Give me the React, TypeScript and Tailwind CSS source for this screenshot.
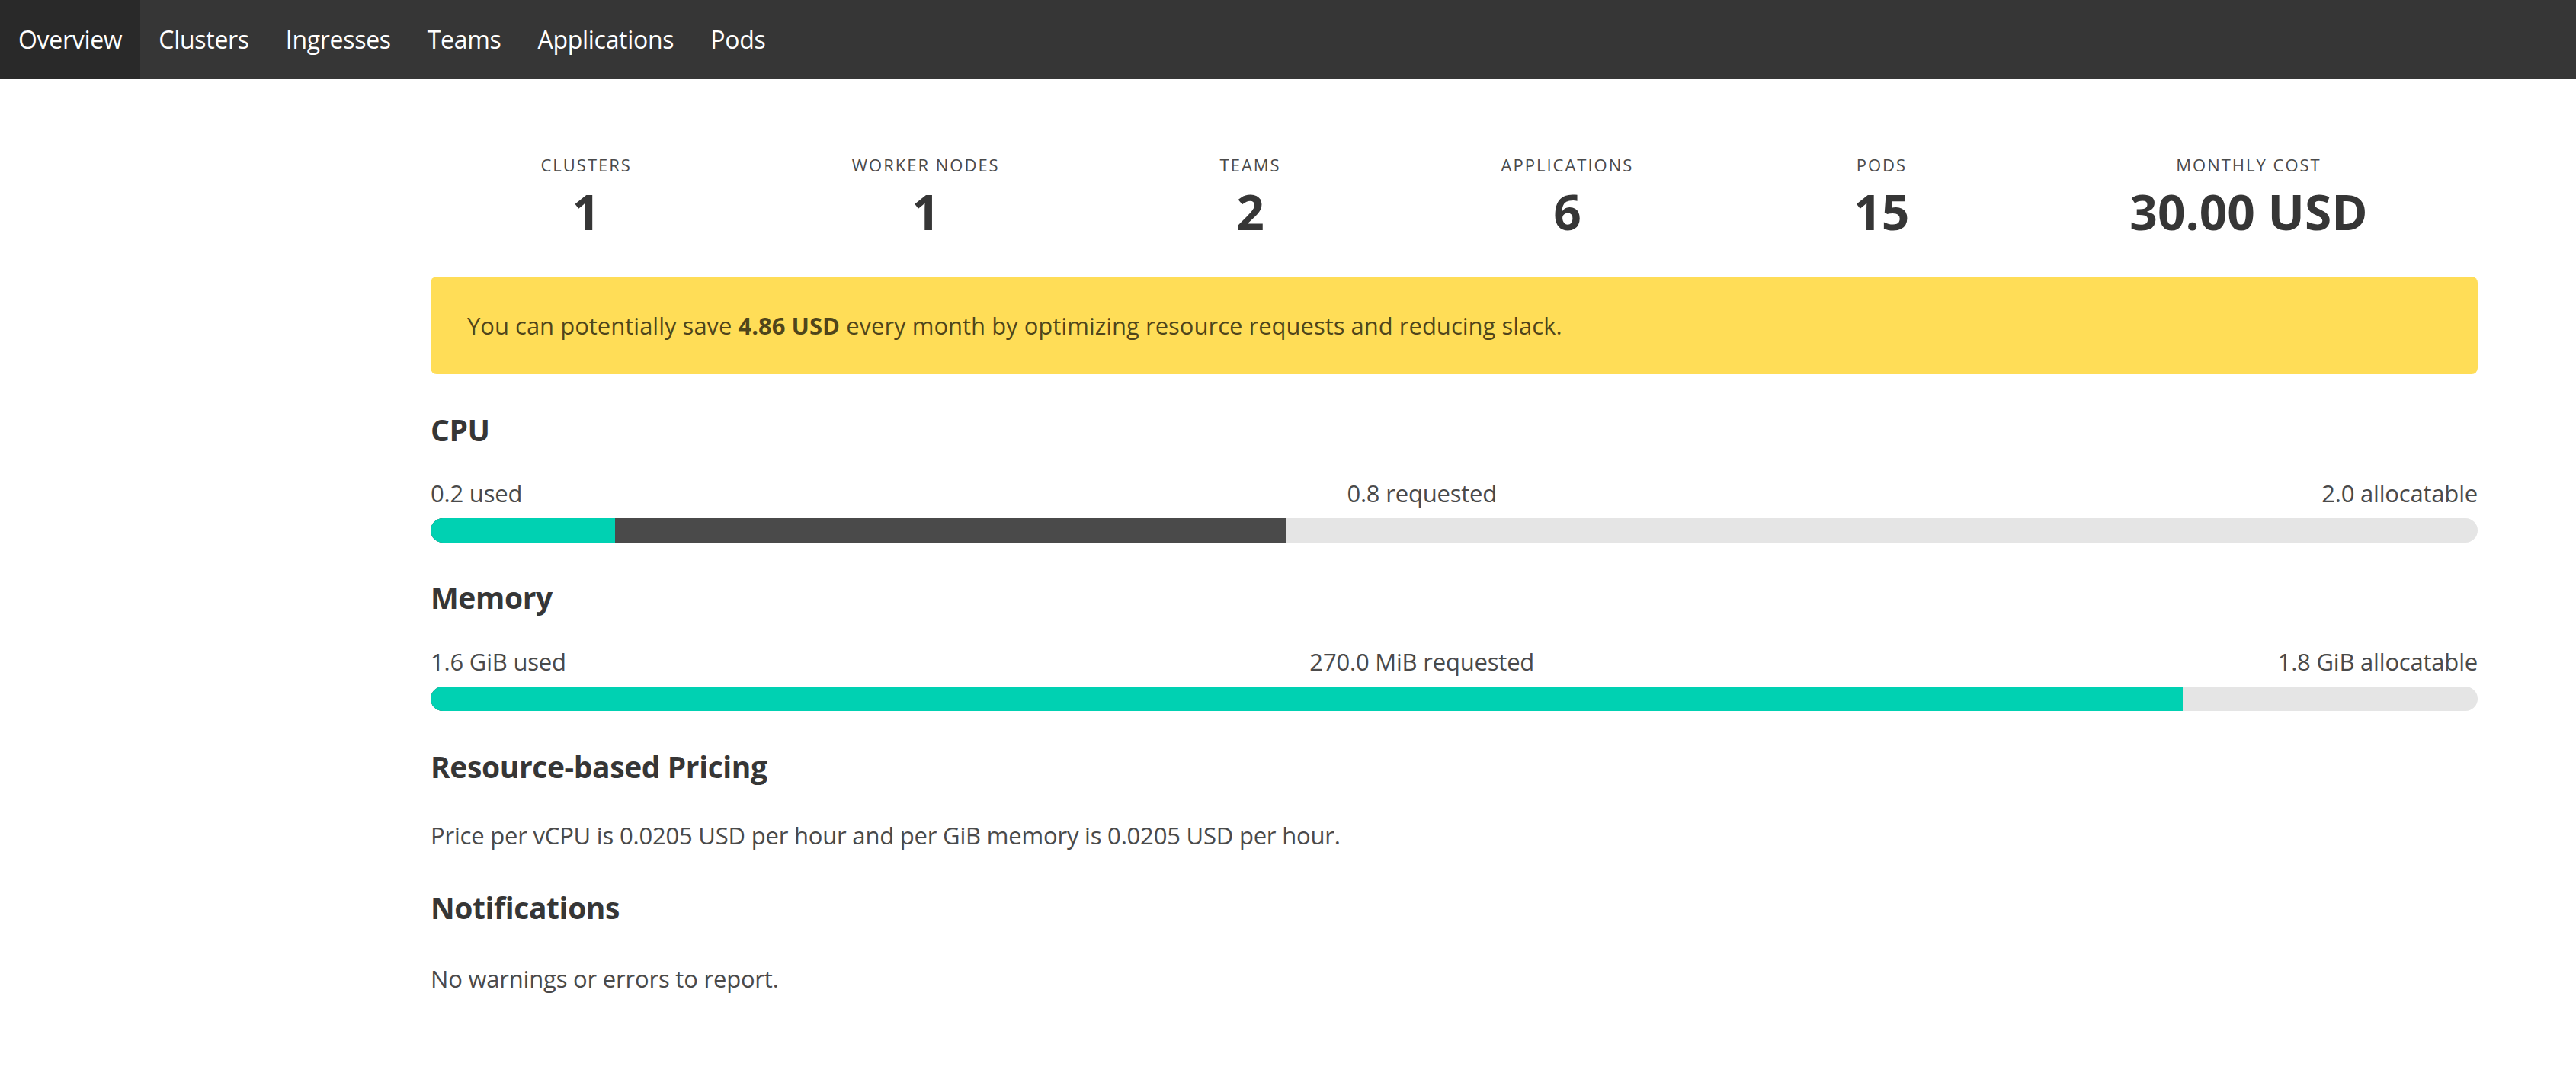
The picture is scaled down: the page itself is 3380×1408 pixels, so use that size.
import React from "react";

const stats = [
  { label: "Clusters", value: "1" },
  { label: "Worker Nodes", value: "1" },
  { label: "Teams", value: "2" },
  { label: "Applications", value: "6" },
  { label: "Pods", value: "15" },
  { label: "Monthly Cost", value: "30.00 USD" },
];

const navItems = ["Overview", "Clusters", "Ingresses", "Teams", "Applications", "Pods"];

function Bar({ used, requested }: { used: number; requested: number }) {
  return (
    <div className="relative h-[32px] w-full overflow-hidden rounded-full bg-[#e5e5e5]">
      <div className="absolute left-0 top-0 h-full bg-[#4a4a4a]" style={{ width: `${requested}%` }} />
      <div className="absolute left-0 top-0 h-full bg-[#00d1b2]" style={{ width: `${used}%` }} />
    </div>
  );
}

function LabelRow({ a, b, c }: { a: string; b: string; c: string }) {
  return (
    <div className="flex justify-between text-[31px] leading-[48px] tracking-[-0.2px] text-[#4a4a4a]">
      <span>{a}</span>
      <span>{b}</span>
      <span>{c}</span>
    </div>
  );
}

export default function App() {
  return (
    <div className="min-h-[1408px] bg-white font-['Open_Sans',sans-serif] text-[#4a4a4a]">
      <nav className="flex h-[104px] items-stretch bg-[#363636]">
        {navItems.map((item, i) => (
          <a
            key={item}
            className={`flex items-center px-[24px] text-[32px] leading-[48px] tracking-[-0.3px] text-white ${i === 0 ? "bg-[#292929]" : ""}`}
          >
            {item}
          </a>
        ))}
      </nav>

      <main className="pl-[565px] pr-[129px] pt-[96px]">
        <div className="mb-[49px] flex">
          {stats.map((s) => (
            <div key={s.label} className="flex flex-auto flex-col items-center text-center">
              <p className="mb-[9px] text-[22px] uppercase leading-[33px] tracking-[2px] text-[#4a4a4a]">{s.label}</p>
              <p className="text-[64px] font-bold leading-[72px] text-[#363636]">{s.value}</p>
            </div>
          ))}
        </div>

        <div className="mb-[50px] rounded-[8px] bg-[#ffdd57] pb-[40px] pl-[48px] pr-[80px] pt-[40px] text-[31px] leading-[48px] text-[rgba(0,0,0,0.7)]">
          You can potentially save <strong className="font-bold">4.86 USD</strong> every month by optimizing resource requests and reducing slack.
        </div>

        <h2 className="mb-[37px] text-[39px] font-bold leading-[45px] tracking-[-0.4px] text-[#363636]">CPU</h2>
        <div className="mb-[9px]">
          <LabelRow a="0.2 used" b="0.8 requested" c="2.0 allocatable" />
        </div>
        <div className="mb-[49px]">
          <Bar used={9} requested={41.8} />
        </div>

        <h2 className="mb-[38px] text-[39px] font-bold leading-[45px] tracking-[-0.4px] text-[#363636]">Memory</h2>
        <div className="mb-[9px]">
          <LabelRow a="1.6 GiB used" b="270.0 MiB requested" c="1.8 GiB allocatable" />
        </div>
        <div className="mb-[50px]">
          <Bar used={85.6} requested={14.6} />
        </div>

        <h2 className="mb-[44px] text-[39px] font-bold leading-[45px] tracking-[-0.4px] text-[#363636]">Resource-based Pricing</h2>
        <p className="mb-[48px] text-[31px] leading-[48px] tracking-[-0.2px]">
          Price per vCPU is 0.0205 USD per hour and per GiB memory is 0.0205 USD per hour.
        </p>

        <h2 className="mb-[47px] text-[39px] font-bold leading-[45px] tracking-[-0.4px] text-[#363636]">Notifications</h2>
        <p className="text-[31px] leading-[48px] tracking-[-0.2px]">No warnings or errors to report.</p>
      </main>
    </div>
  );
}
